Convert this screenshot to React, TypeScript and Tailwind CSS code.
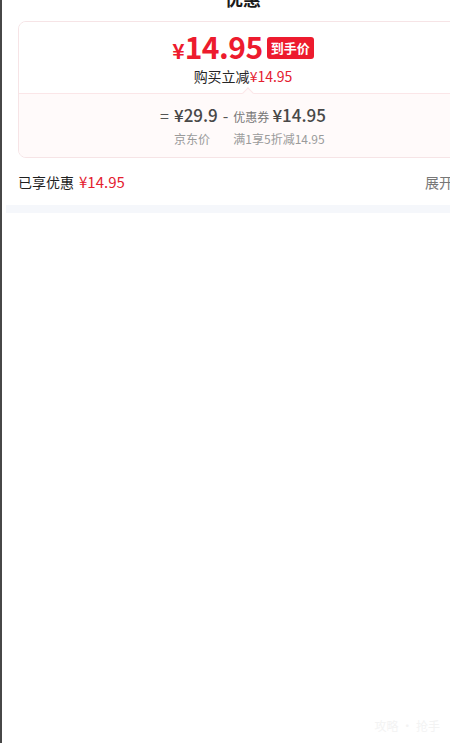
import { ChevronDown } from "lucide-react";

const font = { fontFamily: '"Noto Sans CJK SC", "Noto Sans", sans-serif' };

export default function App() {
  return (
    <div style={font} className="relative flex w-[450px] h-[743px] overflow-hidden bg-white">
      {/* edge of the page underneath */}
      <div className="w-[2px] shrink-0 bg-[#474747]" />

      <div className="w-[482px] shrink-0 px-[16px]">
        <div className="-mt-[14px] mb-[11px] flex h-[24px] items-center justify-center text-[18px] font-bold leading-none text-[#1a1a1a]">
          优惠
        </div>

        <div className="overflow-hidden rounded-[8px] border border-[#f6e4e6]">
          <div className="flex h-[71px] flex-col items-center bg-white pt-[10px]">
            <div className="flex h-[32px] items-center gap-[4px]">
              <div className="flex items-baseline font-bold leading-[30px] text-[#ed1b2e]">
                <span className="text-[21px]">¥</span>
                <span className="text-[30px] tracking-[-0.5px]">14.95</span>
              </div>
              <span className="rounded-[3px] bg-[#ed1b2e] px-[4px] py-[2px] text-[13px] font-bold leading-[18px] text-white">
                到手价
              </span>
            </div>
            <div className="mt-[2px] text-[14px] leading-[20px] text-[#262626]">
              购买立减<span className="text-[#e4202f]">¥14.95</span>
            </div>
          </div>

          <div className="relative flex h-[64px] flex-col items-center justify-center border-t border-[#fbe6e8] bg-[#fffafa]">
            <div className="absolute -top-[5px] left-[225px] h-[8px] w-[8px] rotate-45 border-l border-t border-[#fbe6e8] bg-[#fffafa]" />
            <div className="grid grid-cols-[auto_auto_auto_auto] items-baseline gap-x-[5px] gap-y-[2px]">
              <span className="text-[16px] leading-[22px] text-[#555]">=</span>
              <span className="text-[17px] font-medium leading-[22px] text-[#484848]">¥29.9</span>
              <span className="text-[16px] leading-[22px] text-[#555]">-</span>
              <span className="leading-[22px]">
                <span className="text-[12px] text-[#777]">优惠券</span>
                <span className="ml-[3px] text-[17px] font-medium text-[#484848]">¥14.95</span>
              </span>
              <span />
              <span className="text-[12px] leading-[18px] text-[#9a9a9a]">京东价</span>
              <span />
              <span className="text-[12px] leading-[18px] text-[#9a9a9a]">满1享5折减14.95</span>
            </div>
          </div>
        </div>

        <div className="flex h-[48px] items-center justify-between">
          <div className="flex items-baseline gap-[5px]">
            <span className="text-[14px] text-[#1f1f1f]">已享优惠</span>
            <span className="text-[15px] text-[#e4202f]">¥14.95</span>
          </div>
          <div className="flex items-center gap-[2px] text-[14px] text-[#777]">
            展开
            <ChevronDown size={13} strokeWidth={1.5} />
          </div>
        </div>
      </div>

      <div className="absolute left-[6px] top-[205px] h-[8px] w-[444px] bg-[#f5f7fb]" />

      <div className="absolute bottom-[8px] right-[10px] text-[12px] text-[#f3f3f3]">攻略 · 抢手</div>
    </div>
  );
}
